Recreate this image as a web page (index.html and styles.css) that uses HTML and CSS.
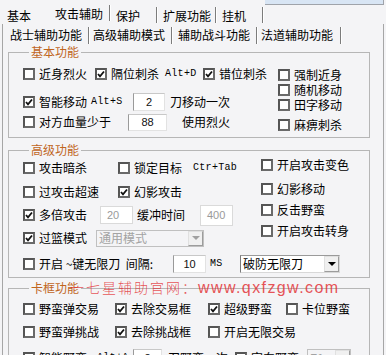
FILE: index.html
```html
<!DOCTYPE html>
<html lang="zh-CN">
<head>
    <meta charset="UTF-8">
    <meta name="viewport" content="width=device-width, initial-scale=1.0">
    <title>攻击辅助</title>
    <link rel="stylesheet" href="styles.css">
</head>
<body>
    <div class="main-tabs">
        <span class="tab t1">基本</span>
        <span class="tab t2 active">攻击辅助</span>
        <span class="tab t3">保护</span>
        <span class="tab t4">扩展功能</span>
        <span class="tab t5">挂机</span>
        <span class="tab-rest"></span>
    </div>
    <div class="panel">
        <div class="sub-tabs">
            <span class="subtab s1 active">战士辅助功能</span>
            <span class="subtab s2">高级辅助模式</span>
            <span class="subtab s3">辅助战斗功能</span>
            <span class="subtab s4">法道辅助功能</span>
        </div>

        <fieldset class="group g-basic">
            <legend>基本功能</legend>
            <div class="group-body">
                <div class="col-left">
                    <div class="row b1">
                        <label class="chk w72"><span class="cb"></span>近身烈火</label>
                        <label class="chk w70"><span class="cb on"><svg viewBox="0 0 8 8"><polyline points="1,4 3,6.3 7,1.5"/></svg></span>隔位刺杀</label>
                        <span class="key w38">Alt+D</span>
                        <label class="chk"><span class="cb on"><svg viewBox="0 0 8 8"><polyline points="1,4 3,6.3 7,1.5"/></svg></span>错位刺杀</label>
                    </div>
                    <div class="row b2">
                        <label class="chk w68"><span class="cb on"><svg viewBox="0 0 8 8"><polyline points="1,4 3,6.3 7,1.5"/></svg></span>智能移动</label>
                        <span class="key w42">Alt+S</span>
                        <span class="tb tb-move">2</span>
                        <span class="txt">刀移动一次</span>
                    </div>
                    <div class="row b3">
                        <label class="chk w105"><span class="cb"></span>对方血量少于</label>
                        <span class="tb tb-hp">88</span>
                        <span class="txt">使用烈火</span>
                    </div>
                </div>
                <div class="col-right">
                    <label class="chk rb1"><span class="cb"></span>强制近身</label>
                    <label class="chk rb2"><span class="cb"></span>随机移动</label>
                    <label class="chk rb3"><span class="cb"></span>田字移动</label>
                    <label class="chk rb4"><span class="cb"></span>麻痹刺杀</label>
                </div>
            </div>
        </fieldset>

        <fieldset class="group g-adv">
            <legend>高级功能</legend>
            <div class="group-body">
                <div class="col-left wide">
                    <div class="row a1">
                        <label class="chk w95"><span class="cb"></span>攻击暗杀</label>
                        <label class="chk w75"><span class="cb"></span>锁定目标</label>
                        <span class="key">Ctr+Tab</span>
                    </div>
                    <div class="row a2">
                        <label class="chk w95"><span class="cb"></span>过攻击超速</label>
                        <label class="chk"><span class="cb on"><svg viewBox="0 0 8 8"><polyline points="1,4 3,6.3 7,1.5"/></svg></span>幻影攻击</label>
                    </div>
                    <div class="row a3">
                        <label class="chk w77"><span class="cb on"><svg viewBox="0 0 8 8"><polyline points="1,4 3,6.3 7,1.5"/></svg></span>多倍攻击</label>
                        <span class="tb dis tb-mult">20</span>
                        <span class="txt w63">缓冲时间</span>
                        <span class="tb dis tb-buf">400</span>
                    </div>
                    <div class="row a4">
                        <label class="chk w75"><span class="cb on"><svg viewBox="0 0 8 8"><polyline points="1,4 3,6.3 7,1.5"/></svg></span>过篮模式</label>
                        <span class="sel dis sel-mode"><span class="sel-text">通用模式</span><span class="sel-btn"><i></i></span></span>
                    </div>
                    <div class="row a5">
                        <label class="chk w150"><span class="cb"></span>开启 ~键无限刀&nbsp;&nbsp;间隔:</label>
                        <span class="tb tb-gap">10</span>
                        <span class="key w34">MS</span>
                        <span class="sel sel-break"><span class="sel-text">破防无限刀</span><span class="sel-btn"><i></i></span></span>
                    </div>
                </div>
                <div class="col-right">
                    <label class="chk ra1"><span class="cb"></span>开启攻击变色</label>
                    <label class="chk ra2"><span class="cb"></span>幻影移动</label>
                    <label class="chk ra3"><span class="cb"></span>反击野蛮</label>
                    <label class="chk ra4"><span class="cb"></span>开启攻击转身</label>
                </div>
            </div>
        </fieldset>

        <fieldset class="group g-frame">
            <legend>卡框功能<span class="watermark"><span class="wm-cn">一七星辅助官网：</span>www.qxfzgw.com</span></legend>
            <div class="frame-grid">
                <label class="chk"><span class="cb"></span>野蛮弹交易</label>
                <label class="chk"><span class="cb on"><svg viewBox="0 0 8 8"><polyline points="1,4 3,6.3 7,1.5"/></svg></span>去除交易框</label>
                <label class="chk"><span class="cb on"><svg viewBox="0 0 8 8"><polyline points="1,4 3,6.3 7,1.5"/></svg></span>超级野蛮</label>
                <label class="chk"><span class="cb"></span>卡位野蛮</label>
                <label class="chk"><span class="cb"></span>野蛮弹挑战</label>
                <label class="chk"><span class="cb on"><svg viewBox="0 0 8 8"><polyline points="1,4 3,6.3 7,1.5"/></svg></span>去除挑战框</label>
                <label class="chk span2"><span class="cb"></span>开启无限交易</label>
            </div>
            <div class="row f3">
                <label class="chk w74"><span class="cb"></span>智能野蛮</label>
                <span class="key w36">Alt+A</span>
                <span class="tb tb-bar">2</span>
                <span class="txt w67">刀野蛮一次</span>
                <label class="chk w72"><span class="cb on"><svg viewBox="0 0 8 8"><polyline points="1,4 3,6.3 7,1.5"/></svg></span>定向野蛮</label>
                <span class="sel dis sel-dir"><span class="sel-text">Z1</span><span class="sel-btn"><i></i></span></span>
            </div>
        </fieldset>
    </div>
</body>
</html>
```

FILE: styles.css
```css
body {
    margin: 0;
    width: 386px;
    height: 355px;
    overflow: hidden;
    background-color: #f4f4f6;
    color: #000;
    font-family: "Noto Sans CJK SC", "Liberation Sans", sans-serif;
    font-size: 12px;
    line-height: 14px;
}

/* top tab strip */
.main-tabs {
    display: flex;
    height: 24px;
}
.tab {
    box-sizing: border-box;
    height: 16px;
    margin-top: 7px;
    padding: 2px 0 0 6px;
    white-space: nowrap;
    border-right: 1px solid #7c7c7c;
    box-shadow: 1px 0 0 #fff;
}
.tab.active {
    margin-top: 5px;
    padding-top: 2px;
}
.t1 { width: 48px; padding-left: 7px; border-right: none; box-shadow: none; }
.t2 { width: 62px; padding-left: 7px; }
.t3 { width: 47px; }
.t4 { width: 59px; }
.t5 { width: 47px; }
.tab-rest {
    flex: 1;
    height: 4px;
    margin-left: 2px;
    margin-right: 2px;
    background-color: #d8e5f4;
    border-bottom: 1px solid #9fa3aa;
    border-right: 1px solid #9fa3aa;
}

/* inner page */
.panel {
    width: 382px;
    height: 331px;
    margin-left: 2px;
    box-sizing: border-box;
    border-left: 1px solid #a6a6a6;
    border-right: 1px solid #a6a6a6;
}
.sub-tabs {
    display: flex;
    height: 20px;
}
.subtab {
    box-sizing: border-box;
    height: 17px;
    margin-top: 3px;
    padding: 1px 0 0 4px;
    white-space: nowrap;
    border-right: 1px solid #7c7c7c;
    box-shadow: 1px 0 0 #fff;
}
.s1 { width: 86px; padding-left: 7px; }
.s2 { width: 83px; padding-left: 4px; }
.s3 { width: 85px; padding-left: 6px; }
.s4 { width: 84px; padding-left: 4px; }

/* group boxes */
.group {
    width: 362px;
    box-sizing: border-box;
    margin: 0 0 0 5px;
    padding: 0 0 0 14px;
    border: 1px solid #b6b6b6;
    min-width: 0;
}
.group legend {
    margin-left: 6px;
    padding: 0 2px;
    color: #c0661e;
    white-space: nowrap;
    line-height: 14px;
}
.g-basic { margin-top: 1px; height: 93px; }
.g-adv { margin-top: 5px; height: 135px; }
.g-frame { margin-top: 3px; height: 90px; }

.group-body {
    display: flex;
}
.col-left {
    width: 255px;
    flex: none;
}
.col-left.wide {
    width: 238px;
}
.col-right {
    display: flex;
    flex-direction: column;
}

.row {
    display: flex;
    align-items: center;
    height: 20px;
    white-space: nowrap;
}
.row > * {
    flex: none;
}

/* checkbox label */
.chk {
    display: inline-flex;
    align-items: center;
    gap: 4px;
    white-space: nowrap;
}
.cb {
    box-sizing: border-box;
    width: 12px;
    height: 12px;
    flex: none;
    background: #fff;
    border: 2px solid #555;
    border-right-color: #6a6a6a;
    border-bottom-color: #6a6a6a;
    display: flex;
    align-items: center;
    justify-content: center;
}
.cb svg {
    width: 8px;
    height: 8px;
}
.cb polyline {
    fill: none;
    stroke: #111;
    stroke-width: 1.8;
}

.key {
    font-family: "Liberation Mono", "DejaVu Sans Mono", monospace;
    font-size: 10px;
    letter-spacing: 0.3px;
}
.txt {
    white-space: nowrap;
}

.tb {
    box-sizing: border-box;
    display: inline-flex;
    align-items: center;
    justify-content: center;
    background: #fff;
    border: 1px solid #e2e2e2;
    border-left-color: #9a9a9a;
    border-top-color: #c8c8c8;
    font-family: "Liberation Sans", Arial, sans-serif;
    font-size: 11px;
    color: #111;
}
.tb.dis {
    color: #9a9a9a;
    border-color: #dadada;
    justify-content: flex-start;
    padding-left: 6px;
}

.sel {
    box-sizing: border-box;
    display: inline-flex;
    align-items: center;
    background: #fff;
    border: 1px solid #d8d8d8;
    border-left-color: #7a7a7a;
    border-top-color: #9a9a9a;
}
.sel-text {
    flex: 1;
    padding-left: 2px;
}
.sel-btn {
    box-sizing: border-box;
    width: 15px;
    height: 100%;
    display: flex;
    align-items: center;
    justify-content: center;
    background: #f0f0f0;
    border: 1px solid #e0e0e0;
    border-right-color: #9c9c9c;
    border-bottom-color: #9c9c9c;
}
.sel-btn i {
    width: 0;
    height: 0;
    border-left: 4px solid transparent;
    border-right: 4px solid transparent;
    border-top: 4px solid #000;
}
.sel.dis {
    background: #f4f4f6;
    border-color: #c0c0c0;
    color: #a3a3a3;
}
.sel.dis .sel-btn i {
    border-top-color: #a0a0a0;
}

/* widths */
.w34 { width: 30px; margin-left: 4px; }
.w36 { width: 36px; }
.w38 { width: 38px; }
.w42 { width: 42px; }
.w63 { width: 63px; }
.w67 { width: 67px; }
.w68 { width: 68px; }
.w70 { width: 70px; }
.w72 { width: 72px; }
.w74 { width: 74px; }
.w75 { width: 75px; }
.w77 { width: 77px; }
.w95 { width: 95px; }
.w105 { width: 105px; }
.w150 { width: 150px; }

/* basic group rows */
.b1 { margin-top: 7px; height: 16px; }
.b2 { margin-top: 10px; }
.tb-move { width: 32px; height: 18px; }
.tb-hp { width: 39px; height: 17px; }
.b3 .txt { margin-left: 15px; }
.b2 .txt { margin-left: 5px; }
.rb1 { margin-top: 8px; height: 15px; }
.rb2 { height: 15px; }
.rb3 { height: 15px; }
.rb4 { margin-top: 5px; height: 15px; }

/* advanced group rows */
.a1 { margin-top: 1px; }
.a2 { margin-top: 4px; }
.a3 { margin-top: 3px; }
.a4 { margin-top: 3px; }
.a5 { margin-top: 6px; }
.tb-mult { width: 33px; height: 18px; }
.a3 .txt { margin-left: 4px; }
.tb-buf { width: 33px; height: 21px; }
.sel-mode { width: 108px; height: 17px; margin-left: -2px; }
.tb-gap { width: 33px; height: 18px; }
.sel-break { width: 100px; height: 18px; margin-left: 0; }
.ra1 { height: 18px; margin-top: -1px; }
.ra2 { height: 18px; margin-top: 6px; }
.ra3 { height: 18px; margin-top: 3px; }
.ra4 { height: 18px; margin-top: 3px; }

/* frame group */
.watermark {
    position: absolute;
    margin-left: -9px;
    margin-top: -2px;
    color: rgba(226, 40, 44, 0.8);
    font-family: "Liberation Sans", Arial, sans-serif;
    font-size: 16px;
    letter-spacing: 1.4px;
    line-height: 16px;
}
.wm-cn {
    font-family: "Noto Sans CJK SC", sans-serif;
    font-weight: 300;
    font-size: 14px;
    letter-spacing: 2px;
}
.frame-grid {
    display: grid;
    grid-template-columns: 92px 93px 78px 1fr;
    grid-auto-rows: 20px;
    row-gap: 3px;
    align-items: center;
    margin-top: 4px;
}
.span2 { grid-column: span 2; }
.f3 { margin-top: 6px; }
.tb-bar { width: 29px; height: 18px; }
.f3 .txt { margin-left: 6px; }
.sel-dir { width: 44px; height: 18px; }
```
